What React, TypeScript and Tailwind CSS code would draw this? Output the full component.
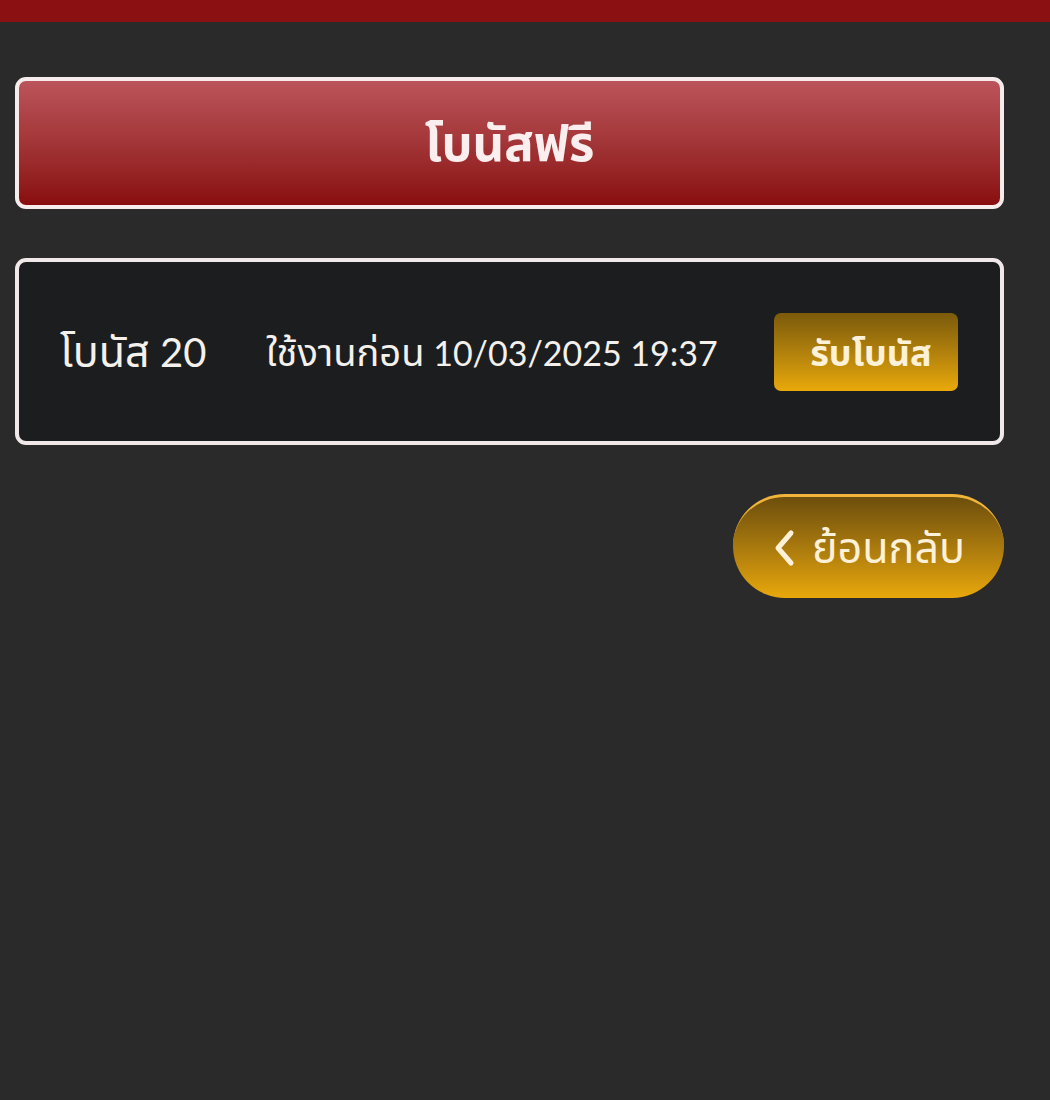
export default function App() {
  return (
    <div
      className="min-h-[1100px] w-full bg-[#2a2a2a] text-[#fbf3ea]"
      style={{ fontFamily: 'Lato, "Noto Sans Thai", "Noto Sans", sans-serif' }}
    >
      {/* top bar */}
      <div className="h-[22px] w-full bg-[#8b1012]"></div>

      <div className="flex flex-col px-[15px] pr-[46px] pt-[55px]">
        {/* title */}
        <div className="flex h-[132px] items-center justify-center rounded-[11px] border-[4px] border-[#f6ecec] bg-gradient-to-b from-[#bb545b] to-[#890b0e]">
          <h1 className="text-[49px] font-bold text-[#fbeeee]">โบนัสฟรี</h1>
        </div>

        {/* bonus item */}
        <div className="mt-[49px] flex h-[187px] items-center rounded-[11px] border-[4px] border-[#f1e9e9] bg-[#1c1d1f] pl-[41px] pr-[42px]">
          <span className="w-[206px] text-[40px] text-[#f4f0ec]">
            <span className="text-[43px]">โบนัส</span> 20
          </span>
          <span className="flex-1 text-[34px] text-[#f4f0ec]">
            <span className="text-[38px]">ใช้งานก่อน</span> 10/03/2025 19:37
          </span>
          <button className="flex h-[78px] w-[184px] items-center justify-center rounded-[7px] bg-gradient-to-b from-[#7b5a0b] to-[#e9a90a] pl-[10px] text-[36px] font-bold text-[#fdf1d8]">
            รับโบนัส
          </button>
        </div>

        {/* back */}
        <div className="mt-[49px] flex justify-end">
          <button className="flex h-[104px] w-[271px] items-center justify-center gap-[14px] rounded-full border-t-[3px] border-[#f0b53a] bg-gradient-to-b from-[#6d4e0b] to-[#e9a80b] text-[43px] text-[#fdf1d8]">
            <svg width="26" height="40" viewBox="0 0 26 40" fill="none">
              <path d="M19 5 L6 20 L19 35" stroke="#fdf1d8" strokeWidth="5" strokeLinecap="round" strokeLinejoin="round" />
            </svg>
            <span>ย้อนกลับ</span>
          </button>
        </div>
      </div>
    </div>
  );
}
